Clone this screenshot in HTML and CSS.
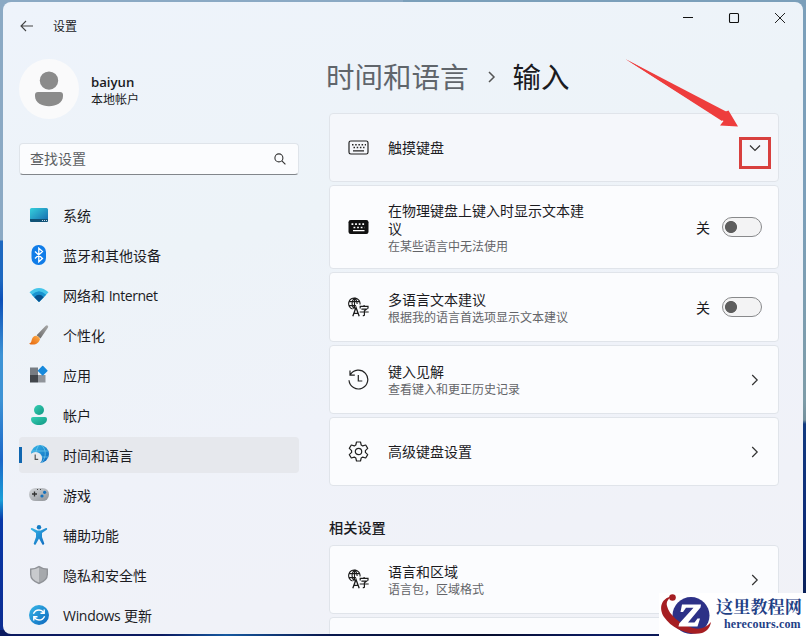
FILE: index.html
```
<!DOCTYPE html>
<html lang="zh-CN">
<head>
<meta charset="utf-8">
<title>设置</title>
<link rel="stylesheet" href="styles.css">
</head>
<body>
<svg class="defs" width="0" height="0" aria-hidden="true">
  <defs>
    <linearGradient id="gScreen" x1="0" y1="0" x2="1" y2="1"><stop offset="0" stop-color="#35d0dc"/><stop offset="1" stop-color="#1565ad"/></linearGradient>
    <linearGradient id="gBrush" x1="0" y1="1" x2="1" y2="0"><stop offset="0" stop-color="#666"/><stop offset="1" stop-color="#aaa"/></linearGradient>
    <linearGradient id="gTip" x1="0" y1="1" x2="1" y2="0"><stop offset="0" stop-color="#e3620c"/><stop offset="1" stop-color="#ffb04a"/></linearGradient>
    <linearGradient id="gTeal" x1="0" y1="0" x2="1" y2="1"><stop offset="0" stop-color="#36cfb4"/><stop offset="1" stop-color="#119783"/></linearGradient>
    <linearGradient id="gBlue" x1="0" y1="0" x2="1" y2="1"><stop offset="0" stop-color="#38b8e8"/><stop offset="1" stop-color="#0c66bd"/></linearGradient>
    <linearGradient id="gGrey" x1="0" y1="0" x2="1" y2="1"><stop offset="0" stop-color="#d5d8dc"/><stop offset="1" stop-color="#8d9196"/></linearGradient>
    <symbol id="chev" viewBox="0 0 12 12"><path d="M3.2 1l5 5-5 5" fill="none" stroke="#333" stroke-width="1.2"/></symbol>
    <symbol id="lang" viewBox="0 0 21 21">
      <g fill="none" stroke="#1b1b1b" stroke-width="1.1">
        <path d="M4.600 12.100A5.700 5.700 0 1 1 12 7.500M6.500 1c-3.300 3-3.300 8 0 11M6.500 1c2 1.800 2.700 4 2.600 6M1.400 4.600h10.200M1.100 8.600h6.800M6.500 1v10"/>
        <path d="M4.800 19.300l3.200-8.800 3.200 8.800M5.900 16.400h4.200" stroke-width="1.300"/>
        <path d="M12.200 11.500V9.400h7.800v2.100M16.100 9.400V7.900M13.400 12.100h5.200L16.400 13.800v4.100q0 .9-1.600.8M11.700 15h9" stroke-width="1.200"/>
      </g>
    </symbol>
  </defs>
</svg>
<div class="window">
  <header class="titlebar">
    <svg class="back" width="14" height="12" viewBox="0 0 14 12"><path d="M13 6H1.200M6 1L1 6l5 5" fill="none" stroke="#444" stroke-width="1.100"/></svg>
    <span class="app-name">设置</span>
    <div class="controls">
      <svg width="12" height="12" viewBox="0 0 12 12"><path d="M1 5.500h10" stroke="#111" fill="none"/></svg>
      <svg width="12" height="12" viewBox="0 0 12 12"><rect x="1.500" y="1.500" width="9" height="9" rx="1" stroke="#111" stroke-width="1.100" fill="none"/></svg>
      <svg width="12" height="12" viewBox="0 0 12 12"><path d="M1 1l10 10M11 1L1 11" stroke="#222" fill="none"/></svg>
    </div>
  </header>
  <div class="body">
    <aside class="sidebar">
      <div class="profile">
        <div class="avatar"><svg width="30" height="36" viewBox="0 0 30 36"><circle cx="15" cy="9.600" r="9.200" fill="#8b8b8b"/><path d="M4 21h22q3 0 3 3v1c0 7-7 10.200-14 10.200S1 32 1 25v-1q0-3 3-3z" fill="#8b8b8b"/></svg></div>
        <div class="who"><b>baiyun</b><span>本地帐户</span></div>
      </div>
      <div class="search"><span>查找设置</span><svg width="12" height="12" viewBox="0 0 12 12"><circle cx="4.900" cy="4.900" r="4" fill="none" stroke="#333" stroke-width="1.100"/><path d="M7.900 7.900l3.500 3.500" stroke="#333" stroke-width="1.100"/></svg></div>
      <nav class="nav">
        <a><svg width="20" height="20" viewBox="0 0 20 20"><rect x="1" y="3" width="18" height="14" rx="1.500" fill="url(#gScreen)"/><path d="M1 14h18v1.500q0 1.500-1.500 1.500h-15q-1.500 0-1.500-1.500z" fill="#105276"/><path d="M13 15.500h1M15 15.500h1M17 15.500h1" stroke="#cde"/></svg>系统</a>
        <a><svg width="20" height="20" viewBox="0 0 20 20"><rect x="2.500" y="0" width="14.500" height="20" rx="7" fill="#107ce8"/><path d="M6 6.500l7.500 7-3.700 3.300v-13.600l3.700 3.300-7.500 7" fill="none" stroke="#fff" stroke-width="1.300"/></svg>蓝牙和其他设备</a>
        <a><svg width="20" height="20" viewBox="0 0 20 20"><path d="M.5 7.300Q10-1.500 19.500 7.300L10 17z" fill="#45c5ea"/><path d="M2.800 9.700Q10 2.700 17.200 9.700L10 17z" fill="#1992cf"/><path d="M5.300 12.200Q10 7.500 14.700 12.200L10 17z" fill="#07528f"/></svg><span class="tight">网络和 <span>Internet</span></span></a>
        <a><svg width="20" height="20" viewBox="0 0 20 20"><path d="M18.500 .4q1.200.6.500 2L11.500 13.500 7.600 10.200 16.500 1q1-1 2-.6z" fill="url(#gBrush)"/><path d="M7 10.700q3 .6 4 3.300c-.7 3.500-3.500 5.600-7 5.600-1.700 0-3.200-.4-4-.9 3-.8 2-3.500 3.600-6 .8-1.200 2-2 3.400-2z" fill="url(#gTip)"/></svg>个性化</a>
        <a><svg width="20" height="20" viewBox="0 0 20 20"><path d="M1 2.500h8v7.500H1z" fill="#777c83"/><path d="M1 10h8v7.500H1z" fill="#42464c"/><path d="M9 10h7.500v7.500H9z" fill="#90949a"/><rect x="10" y="2" width="7.400" height="7.400" rx=".8" transform="rotate(45 13.700 5.700)" fill="#1689dc"/></svg>应用</a>
        <a><svg width="20" height="20" viewBox="0 0 20 20"><circle cx="10" cy="5" r="5" fill="url(#gTeal)"/><path d="M4 12h12q2 0 2 2c0 4-4 6-8 6s-8-2-8-6q0-2 2-2z" fill="url(#gTeal)"/></svg>帐户</a>
        <a class="active"><svg width="20" height="20" viewBox="0 0 20 20"><circle cx="11" cy="9" r="9" fill="url(#gBlue)"/><path d="M3 6h16M7 12h12M10 0c-4 5-4 12 0 18M12.500 0c5 5 5 12 0 18" fill="none" stroke="#7ed5f0" stroke-width=".6"/><circle cx="6.600" cy="13.400" r="6.500" fill="#e7e9ec"/><path d="M6.200 9.500v4.800h3" fill="none" stroke="#555" stroke-width="1.200"/></svg>时间和语言</a>
        <a><svg width="20" height="20" viewBox="0 0 20 20"><rect x="0" y="3" width="20" height="13" rx="6.300" fill="url(#gGrey)"/><path d="M3 9h5M5.500 6.500v5" stroke="#333" stroke-width="1.300"/><circle cx="15.600" cy="7.300" r="1.600" fill="#1672bd"/><circle cx="13" cy="11" r="1.600" fill="#1672bd"/><path d="M8 4.500h1M11 4.500h1" stroke="#444"/></svg>游戏</a>
        <a><svg width="20" height="20" viewBox="0 0 20 20"><circle cx="10" cy="2.200" r="2.200" fill="#147bc4"/><path d="M3 3q-1.500-.2-1.100 1.400L7 8v4L4.700 18.500q0 1.500 1.800 1.300L10 13.500l3.500 6.300q1.800.2 1.800-1.300L13 12V8l5.100-3.600Q18.500 2.800 17 3l-5.300 2.500H8.300z" fill="url(#gBlue)"/></svg>辅助功能</a>
        <a><svg width="20" height="20" viewBox="0 0 20 20"><path d="M10 .8q3.500 2.700 9 2.700v6q0 6.500-9 9.700-9-3.200-9-9.700v-6Q6.500 3.500 10 .8z" fill="#909398"/><path d="M10 2.400q3.200 2 7.600 2.300v5q0 5-7.600 7.900z" fill="#a6a9ad"/><path d="M10 2.400Q6.800 4.400 2.400 4.700v5q0 5 7.600 7.900z" fill="#c8cacd"/></svg>隐私和安全性</a>
        <a><svg width="20" height="20" viewBox="0 0 20 20"><circle cx="10" cy="10" r="10" fill="url(#gBlue)"/><path d="M4.400 8.800Q6 5 10 5q3 0 4.800 2.700M15.600 11.200Q14 15 10 15q-3 0-4.800-2.700M15.200 4.500v3.700h-3.700M4.800 15.500v-3.700h3.700" fill="none" stroke="#fff" stroke-width="1.400"/></svg><span class="tight wide"><span>Windows</span> 更新</span></a>
      </nav>
    </aside>
    <main class="content">
      <h1><span>时间和语言</span><svg width="8" height="12" viewBox="0 0 8 12"><path d="M1 1l5 5-5 5" fill="none" stroke="#555" stroke-width="1.500"/></svg>输入</h1>
      <section class="cards">
        <div class="card tinted">
          <svg class="ico" width="21" height="21" viewBox="0 0 21 21"><rect x="1" y="4" width="19" height="13" rx="1.800" fill="none" stroke="#222" stroke-width="1.200"/><path d="M4 7.700h14M5.500 10.500h11" stroke="#222" stroke-width="1.400" stroke-dasharray="1.500 1.700"/><path d="M5 13.800h11" stroke="#222" stroke-width="1.200"/></svg>
          <div class="label"><p>触摸键盘</p></div>
          <svg class="down" width="12" height="12" viewBox="0 0 12 12"><path d="M1 3.500l5 5 5-5" fill="none" stroke="#333" stroke-width="1.200"/></svg>
        </div>
        <div class="card tall">
          <svg class="ico" width="21" height="21" viewBox="0 0 21 21"><rect x=".5" y="3" width="20" height="14" rx="2.200" fill="#111"/><path d="M3.500 7.200h14M5.500 10.500h11" stroke="#fff" stroke-width="1.700" stroke-dasharray="1.800 1.800"/><path d="M5 13.700h11.500" stroke="#fff" stroke-width="1.200"/></svg>
          <div class="label two"><p>在物理键盘上键入时显示文本建议</p><small>在某些语言中无法使用</small></div>
          <span class="state">关</span><i class="toggle"></i>
        </div>
        <div class="card mid">
          <svg class="ico" width="21" height="21"><use href="#lang"/></svg>
          <div class="label two"><p>多语言文本建议</p><small>根据我的语言首选项显示文本建议</small></div>
          <span class="state">关</span><i class="toggle"></i>
        </div>
        <div class="card">
          <svg class="ico" width="21" height="21" viewBox="0 0 21 21"><path d="M2.300 5.700A9.400 9.400 0 1 1 1 11.300M2 1.500v4.700h4.800M10.300 6v6h4" fill="none" stroke="#222" stroke-width="1.200"/></svg>
          <div class="label two"><p>键入见解</p><small>查看键入和更正历史记录</small></div>
          <svg class="go" width="12" height="12"><use href="#chev"/></svg>
        </div>
        <div class="card">
          <svg class="ico" width="21" height="21" viewBox="0 0 21 21"><path d="M8.500 1h4l.7 3 1.500.9 3-.9 2 3.400-2.300 2.200v1.800l2.300 2.200-2 3.400-3-.9-1.500.9-.7 3h-4l-.7-3-1.500-.9-3 .9-2-3.400 2.300-2.200V9.600L1.300 7.400l2-3.400 3 .9L7.800 4z" fill="none" stroke="#222" stroke-width="1.200" stroke-linejoin="round"/><circle cx="10.500" cy="10.500" r="3.200" fill="none" stroke="#222" stroke-width="1.200"/></svg>
          <div class="label"><p>高级键盘设置</p></div>
          <svg class="go" width="12" height="12"><use href="#chev"/></svg>
        </div>
      </section>
      <h2>相关设置</h2>
      <section class="cards">
        <div class="card">
          <svg class="ico" width="21" height="21"><use href="#lang"/></svg>
          <div class="label two"><p>语言和区域</p><small>语言包，区域格式</small></div>
          <svg class="go" width="12" height="12"><use href="#chev"/></svg>
        </div>
        <div class="card"></div>
      </section>
    </main>
  </div>
</div>
<svg class="arrow" width="114" height="70" viewBox="0 0 114 70"><path d="M.8.200L98 53.500l5.500-2 9.500 16-18-1 3.500-4.500z" fill="#ee3d3d"/><path d="M.8.200L102 53l-5 9z" fill="#ee3d3d"/></svg>
<div class="highlight"></div>
<div class="watermark">
  <svg width="52" height="43" viewBox="0 0 52 43"><circle cx="32" cy="22.500" r="18.500" fill="#2d3187"/><path d="M13 3C1 6 0 16 5 24c8 12 26 19 38 16 5-2 8-5 9-11-5 6-11 8-18 6C21 31 10 22 8 13c-1-4 1-7 5-10z" fill="#a51e22"/><circle cx="13.500" cy="4.500" r="3.300" fill="#a51e22"/><path d="M23 11.500h19l-.5 3L29 29.500h6.500l3-4h2.500l-2.500 8H19.500l.7-3L34.500 14.800h-7.500L24 19h-2.500z" fill="#fff"/></svg>
  <div class="brand"><strong>这里教程网</strong><em>herecours.com</em></div>
</div>
</body>
</html>
```
FILE: styles.css
```
* { box-sizing: border-box; }
body {
  margin: 0;
  width: 806px;
  height: 636px;
  overflow: hidden;
  padding: 2px 3px;
  background:
    linear-gradient(90deg, #0b1a60 0 20%, #1559a0 28%, #0a1a50 40%, #060d2c 60%, #0c1c66 75%, #060d2c) 0 100% / 100% 6px no-repeat,
    linear-gradient(#8ba9c4 0 240px, #1d68c0 241px 280px, #0c50b8 300px, #3d93d5 355px 400px, #1b67c8 460px, #1a9fd8 500px, #0838a8 520px, #0c2c90) 0 0 / 50% 100% no-repeat,
    linear-gradient(#7b9fba 0 200px, #7d9ca8 400px, #74909c 420px, #123a80 424px, #0d2c78 520px, #081a48) 100% 0 / 50% 100% no-repeat;
  font: 14px/18px "Open Sans", "Noto Sans CJK SC", sans-serif;
  color: #1b1b1f;
}
.defs { position: absolute; }
.window {
  height: 632px;
  width: 800px;
  overflow: hidden;
  border-radius: 8px;
  background: linear-gradient(165deg, #eef3fb 0%, #edf3f8 35%, #eff2f9 60%, #f1f2f7 100%);
}
.titlebar { display: flex; height: 48px; padding-left: 17px; }
.back { margin-top: 18px; }
.app-name { margin: 16px 0 0 19px; font-size: 12px; }
.controls { display: flex; gap: 34px; margin: 10px 17px 0 auto; }
.body { display: flex; }
.sidebar { width: 280px; margin-left: 16px; flex: none; }
.profile { display: flex; gap: 12px; height: 94px; padding-top: 9px; }
.avatar {
  width: 60px; height: 60px; border-radius: 50%; background: #fafafb;
  display: flex; align-items: center; justify-content: center;
}
.who { display: flex; flex-direction: column; padding-top: 15px; line-height: 17px; }
.who b { font-weight: 600; font-size: 13.200px; }
.who span { font-size: 12px; }
.search {
  display: flex; align-items: center; justify-content: space-between;
  height: 32px; margin-top: -1px; padding: 0 12px 0 10px;
  border: 1px solid #dfe4ea; border-bottom-color: #82868b; border-radius: 4px;
  background: #fbfcfe; color: #5c5f63;
}
.nav { display: flex; flex-direction: column; gap: 4px; margin-top: 22px; }
.nav a {
  display: flex; align-items: center; gap: 14px; flex: none;
  height: 36px; padding: 2px 0 0 10px; border-radius: 4px;
}
.nav svg { margin-top: -2px; }
.tight span { letter-spacing: -0.45px; }
.wide span { letter-spacing: -0.3px; }
.nav .active {
  background: linear-gradient(90deg, #0f66b0 0 3px) 0 50% / 3px 16px no-repeat, #e6e8ed;
}
.content { width: 450px; margin-left: 30px; }
h1 {
  display: flex; align-items: center; margin: 10px 0 0 -3px; height: 34px;
  font-size: 28.500px; line-height: 34px; font-weight: 400; color: #1b1b1f;
}
h1 span { color: #60656b; }
h1 svg { margin: 0 17px 0 19px; }
.cards { display: flex; flex-direction: column; gap: 3px; }
h1 + .cards { margin-top: 19px; }
.card {
  display: flex; align-items: center; height: 69px; padding: 0 16px 0 17.500px;
  border: 1px solid #e0e4ea; border-radius: 4px; background: #fbfcfe;
}
.tinted { background: #f5f7fb; }
.tall { height: 84px; }
.mid { height: 70px; }
.ico { flex: none; }
.label { width: 200px; margin: 0 auto 0 19.500px; white-space: nowrap; }
.two { padding-top: 2px; }
.label p { margin: 0; white-space: normal; }
.label small { display: block; font-size: 12px; line-height: 17px; color: #636468; }
.go, .down { margin-right: 1px; }
.state { margin-right: 12px; padding-top: 2px; }
.toggle {
  width: 40px; height: 20px; border: 1px solid #88898b; border-radius: 10px;
  background: radial-gradient(circle at 8px 9px, #5d5d5d 0 5.600px, #f3f3f4 6.400px);
}
h2 { margin: 33px 0 8px; font-size: 14.200px; line-height: 18px; font-weight: 500; }
.arrow { position: absolute; left: 625px; top: 59px; }
.highlight { position: absolute; left: 739px; top: 137px; width: 32px; height: 32px; border: 3px solid #d8403e; }
.watermark {
  position: absolute; left: 659px; top: 593px; width: 147px; height: 43px;
  display: flex; background: #fff; color: #1f4186;
}
.brand { display: flex; flex-direction: column; margin-left: 5px; }
.brand strong { font: 700 17.200px/25px "Noto Serif CJK SC", "Noto Sans CJK SC", serif; white-space: nowrap; }
.brand em { margin-left: 8px; font: 700 12px/13px "Liberation Serif", serif; letter-spacing: 0.150px; }
```
